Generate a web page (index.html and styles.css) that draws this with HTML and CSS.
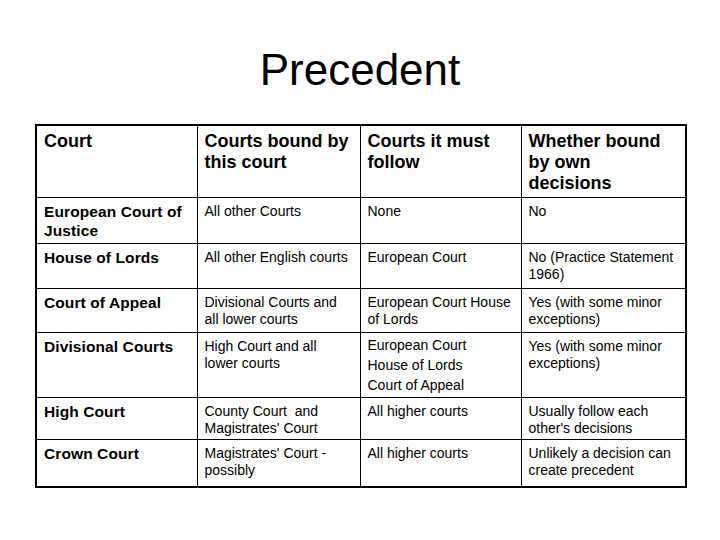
FILE: index.html
```html
<!DOCTYPE html>
<html>
<head>
<meta charset="utf-8">
<link rel="stylesheet" href="styles.css">
</head>
<body>
<h1 class="title">Precedent</h1>
<table class="grid">
  <colgroup>
    <col class="c1"><col class="c2"><col class="c3"><col class="c4">
  </colgroup>
  <tr class="head">
    <th>Court</th>
    <th>Courts bound by this court</th>
    <th>Courts it must follow</th>
    <th>Whether bound by own decisions</th>
  </tr>
  <tr class="r1">
    <td class="name">European Court of Justice</td>
    <td>All other Courts</td>
    <td>None</td>
    <td>No</td>
  </tr>
  <tr class="r2">
    <td class="name">House of Lords</td>
    <td>All other English courts</td>
    <td>European Court</td>
    <td>No (Practice Statement 1966)</td>
  </tr>
  <tr class="r3">
    <td class="name">Court of Appeal</td>
    <td>Divisional Courts and all lower courts</td>
    <td>European Court House of Lords</td>
    <td>Yes (with some minor exceptions)</td>
  </tr>
  <tr class="r4">
    <td class="name">Divisional Courts</td>
    <td>High Court and all lower courts</td>
    <td class="list"><span>European Court</span><span>House of Lords</span><span>Court of Appeal</span></td>
    <td>Yes (with some minor exceptions)</td>
  </tr>
  <tr class="r5">
    <td class="name">High Court</td>
    <td>County Court&nbsp; and Magistrates' Court</td>
    <td>All higher courts</td>
    <td>Usually follow each other's decisions</td>
  </tr>
  <tr class="r6">
    <td class="name">Crown Court</td>
    <td>Magistrates' Court - possibly</td>
    <td>All higher courts</td>
    <td>Unlikely a decision can create precedent</td>
  </tr>
</table>
</body>
</html>
```

FILE: styles.css
```css
html, body {
  margin: 0;
  padding: 0;
  background: #ffffff;
  color: #000000;
  font-family: "Liberation Sans", Arial, sans-serif;
}

.title {
  margin: 45px 0 0 0;
  font-size: 44px;
  line-height: 50px;
  font-weight: normal;
  text-align: center;
}

.grid {
  margin: 29px 0 0 35px;
  width: 652px;
  table-layout: fixed;
  border-collapse: collapse;
  border: 2.5px solid #000;
}

.c1 { width: 161px; }
.c2 { width: 163px; }
.c3 { width: 161px; }
.c4 { width: 165px; }

.grid th,
.grid td {
  border: 1px solid #000;
  vertical-align: top;
  text-align: left;
  padding: 5px 7px 0 7px;
  font-size: 14px;
  line-height: 17px;
  font-weight: normal;
}

.grid th {
  font-size: 18px;
  line-height: 21px;
  font-weight: bold;
  padding-top: 5px;
}

.grid td.name {
  font-size: 15.5px;
  line-height: 19px;
  font-weight: bold;
  letter-spacing: 0.1px;
  padding-top: 4px;
}

.grid td.list span {
  display: block;
  line-height: 20px;
}

.grid td.list {
  padding-top: 2px;
}

.head th { height: 66px; }
.r1 td { height: 40px; }
.r2 td { height: 39px; }
.r3 td { height: 38px; }
.r4 td { height: 59px; }
.r5 td { height: 36px; }
.r6 td { height: 41px; }
```
